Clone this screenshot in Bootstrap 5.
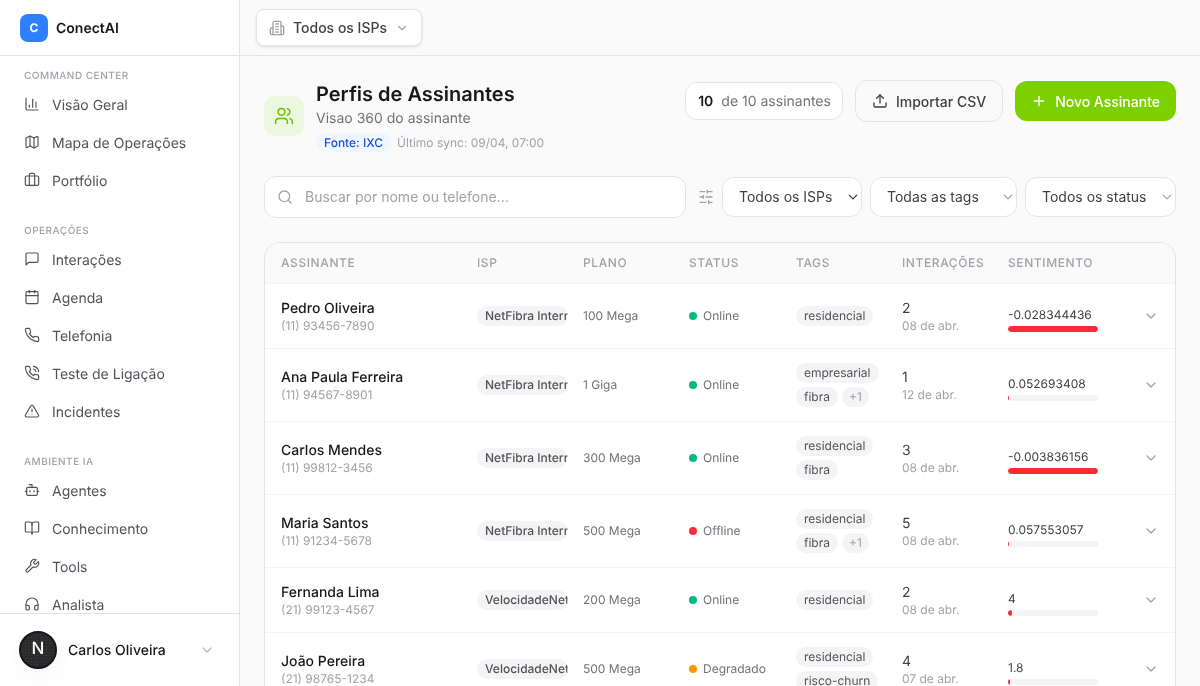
<!DOCTYPE html>
<html lang="pt-BR">
<head>
    <meta charset="UTF-8">
    <meta name="viewport" content="width=device-width, initial-scale=1.0">
    <title>Perfis de Assinantes</title>
    <link href="https://cdn.jsdelivr.net/npm/bootstrap@5.3.3/dist/css/bootstrap.min.css" rel="stylesheet">
    <script src="https://cdn.jsdelivr.net/npm/bootstrap@5.3.3/dist/js/bootstrap.bundle.min.js"></script>
    <style>
        html, body {
            height: 100%;
            overflow: hidden;
        }
        body {
            font-family: "Inter", "Liberation Sans", sans-serif;
            font-size: 14px;
            background-color: #fafafa;
            color: #18181b;
            text-rendering: geometricPrecision;
            -webkit-font-smoothing: antialiased;
        }
        .ico {
            width: 16px;
            height: 16px;
            fill: none;
            stroke: currentColor;
            stroke-width: 2;
            stroke-linecap: round;
            stroke-linejoin: round;
            flex-shrink: 0;
        }
        .app-shell {
            height: 686px;
            will-change: transform;
        }
        .side {
            width: 240px;
            flex-shrink: 0;
            background: #fff;
            border-right: 1px solid #e4e4e7;
        }
        .side-brand {
            height: 56px;
            flex-shrink: 0;
            padding-left: 20px;
            gap: 8px;
            border-bottom: 1px solid #e4e4e7;
            font-weight: 600;
        }
        .side-brand > span:last-child {
            padding-top: 2px;
        }
        .brand-mark {
            width: 28px;
            height: 28px;
            border-radius: 8px;
            background: #2f80ff;
            color: #fff;
            font-size: 12px;
            font-weight: 700;
        }
        .side-scroll {
            flex: 1;
            min-height: 0;
            overflow: hidden;
            padding-top: 11px;
        }
        .side-label {
            height: 16px;
            line-height: 16px;
            padding-top: 1px;
            padding-left: 24px;
            margin-bottom: 2px;
            font-size: 10px;
            font-weight: 500;
            letter-spacing: .05em;
            text-transform: uppercase;
            color: #a1a1aa;
        }
        .side-group {
            margin-bottom: 23px;
        }
        .side-link {
            height: 38px;
            padding: 0 0 0 24px;
            gap: 12px;
            color: #52525b;
            font-size: 14px;
        }
        .side-link .ico {
            stroke-width: 1.75;
        }
        .side-link span {
            padding-top: 2px;
        }
        .side-foot {
            height: 73px;
            flex-shrink: 0;
            padding: 0 24px 0 19px;
            border-top: 1px solid #e4e4e7;
            font-weight: 500;
        }
        .avatar-n {
            width: 38px;
            height: 38px;
            border-radius: 50%;
            background-color: #2a2a2c;
            background-image: radial-gradient(#3b3b3e 1px, transparent 1px);
            background-size: 3px 3px;
            border: 2px solid #18181b;
            box-shadow: 2px 8px 14px 6px rgba(0, 0, 0, .02);
            color: #fff;
            font-size: 17px;
            font-weight: 500;
            margin-right: 11px;
        }
        .top-strip {
            height: 56px;
            flex-shrink: 0;
            padding-left: 16px;
            border-bottom: 1px solid #e4e4e7;
        }
        .isp-switch {
            height: 37px;
            padding: 0 12px;
            gap: 8px;
            background: #fff;
            border: 1px solid #e4e4e7;
            border-radius: 8px;
            box-shadow: 0 1px 3px rgba(0, 0, 0, .12);
            color: #3f3f46;
            font-size: 14px;
            font-weight: 500;
        }
        .isp-switch > .ico:first-child {
            color: #a1a1aa;
        }
        .isp-switch > .ico:last-child {
            width: 14px;
            height: 14px;
            color: #a1a1aa;
        }
        .page-body {
            padding: 24px 24px 0;
            overflow: hidden;
        }
        .head-icon {
            width: 40px;
            height: 40px;
            border-radius: 10px;
            background: #ecf7df;
            color: #6cc000;
            margin-top: 16px;
            margin-right: 12px;
        }
        .head-icon .ico {
            width: 20px;
            height: 20px;
            stroke-width: 1.75;
        }
        .page-title {
            font-size: 20px;
            font-weight: 600;
            line-height: 28px;
            margin: 0;
        }
        .page-sub {
            color: #71717a;
            line-height: 20px;
            height: 20px;
            padding-top: 1px;
            margin: 0 0 5px;
        }
        .src-badge {
            background: #eff6ff;
            color: #1d4ed8;
            border-radius: 20px;
            padding: 0 8px;
            font-size: 12px;
            font-weight: 500;
            line-height: 19px;
        }
        .sync-note {
            color: #a1a1aa;
            font-size: 12px;
            margin-left: 6px;
        }
        .count-pill {
            height: 38px;
            padding: 0 11px 0 12px;
            background: #fff;
            border: 1px solid #e4e4e7;
            border-radius: 12px;
            color: #71717a;
            gap: 8px;
        }
        .count-pill b {
            color: #18181b;
            font-weight: 600;
        }
        .btn-import {
            height: 42px;
            padding: 0 16px;
            gap: 8px;
            background: #fafafa;
            border: 1px solid #e4e4e7;
            border-radius: 12px;
            color: #3f3f46;
            font-size: 14px;
            font-weight: 500;
        }
        .btn-new {
            height: 40px;
            padding: 0 16px;
            gap: 8px;
            background: #7dd000;
            border: 0;
            border-radius: 12px;
            color: #fff;
            font-size: 14px;
            font-weight: 500;
        }
        .filter-row {
            margin: 24px 0;
            gap: 8px;
        }
        .search-box {
            flex: 1;
            height: 42px;
            background: #fff;
            border: 1px solid #e4e4e7;
            border-radius: 12px;
            padding-left: 12px;
            gap: 12px;
            color: #a1a1aa;
        }
        .search-box input {
            border: 0;
            outline: 0;
            padding: 0 0 2px;
            flex: 1;
            font-size: 14px;
            background: transparent;
        }
        .search-box input::placeholder {
            color: #a1a1aa;
        }
        .slider-btn {
            color: #a1a1aa;
            margin: 0 0 0 4px;
        }
        .pick {
            height: 40px;
            padding: 0 16px 2px;
            border: 1px solid #e4e4e7;
            border-radius: 12px;
            background-color: #fff;
            background-position: right 2px center;
            background-size: 12px 10px;
            color: #3f3f46;
            font-size: 14px;
        }
        .pick-a { width: 140px; }
        .pick-b { width: 147px; }
        .pick-c { width: 151px; }
        .pick-b, .pick-c {
            background-image: url("data:image/svg+xml,%3csvg xmlns='http://www.w3.org/2000/svg' viewBox='0 0 16 16'%3e%3cpath fill='none' stroke='%23a1a1aa' stroke-linecap='round' stroke-linejoin='round' stroke-width='2' d='m2 5 6 6 6-6'/%3e%3c/svg%3e");
        }
        .table-wrap {
            background: #fff;
            border: 1px solid #e4e4e7;
            border-bottom: 0;
            border-radius: 16px 16px 0 0;
            overflow: hidden;
        }
        .subs-table {
            table-layout: fixed;
            width: 100%;
            margin: 0;
        }
        .subs-table th {
            height: 40px;
            padding: 0 0 0 16px;
            background: #fafafa;
            border-bottom: 1px solid #f4f4f5;
            color: #a1a1aa;
            font-size: 12px;
            font-weight: 500;
            letter-spacing: .05em;
            text-transform: uppercase;
            white-space: nowrap;
        }
        .subs-table td {
            padding: 14px 0 14px 16px;
            border-bottom: 1px solid #f4f4f5;
            vertical-align: middle;
            font-size: 12px;
            color: #71717a;
            background: #fff;
        }
        .line-main {
            font-size: 14px;
            line-height: 20px;
            height: 20px;
            padding-top: 1px;
            color: #18181b;
        }
        .sub-name {
            font-weight: 500;
        }
        .line-count {
            color: #3f3f46;
        }
        .line-sub {
            font-size: 12px;
            line-height: 16px;
            color: #a1a1aa;
        }
        .chip {
            display: inline-block;
            height: 20px;
            line-height: 20px;
            padding: 0 8px;
            border-radius: 10px;
            background: #f4f4f5;
            color: #52525b;
            font-size: 12px;
            white-space: nowrap;
        }
        .chip-isp {
            display: block;
            width: 91px;
            overflow: hidden;
            padding-right: 0;
            font-weight: 500;
        }
        .chip-more {
            color: #a1a1aa;
            padding: 0 7px;
        }
        .chip-wrap {
            gap: 4px;
        }
        .dot {
            width: 8px;
            height: 8px;
            border-radius: 50%;
            margin-right: 6px;
        }
        .dot-on { background: #00bc7d; }
        .dot-off { background: #fb2c36; }
        .dot-low { background: #fe9a00; }
        .senti {
            width: 90px;
            padding-top: 7px;
        }
        .senti-val {
            line-height: 16px;
            color: #3f3f46;
            white-space: nowrap;
        }
        .senti-bar {
            height: 6px;
            margin-top: 3px;
            background: #f4f4f5;
            border-radius: 3px;
            overflow: hidden;
        }
        .senti-fill {
            height: 100%;
            background: #fb2c36;
            border-radius: 3px;
        }
        .row-arrow {
            text-align: right;
            padding-right: 16px !important;
            color: #a1a1aa !important;
        }
    </style>
</head>
<body>

    <svg width="0" height="0" class="position-absolute">
        <symbol id="i-chart" viewBox="0 0 24 24"><path d="M3 3v16a2 2 0 0 0 2 2h16"/><path d="M18 17V9"/><path d="M13 17V5"/><path d="M8 17v-3"/></symbol>
        <symbol id="i-map" viewBox="0 0 24 24"><path d="M14.106 5.553a2 2 0 0 0 1.788 0l3.659-1.83A1 1 0 0 1 21 4.619v12.764a1 1 0 0 1-.553.894l-4.553 2.277a2 2 0 0 1-1.788 0l-4.212-2.106a2 2 0 0 0-1.788 0l-3.659 1.83A1 1 0 0 1 3 19.381V6.618a1 1 0 0 1 .553-.894l4.553-2.277a2 2 0 0 1 1.788 0z"/><path d="M15 5.764v15"/><path d="M9 3.236v15"/></symbol>
        <symbol id="i-case" viewBox="0 0 24 24"><path d="M16 20V4a2 2 0 0 0-2-2h-4a2 2 0 0 0-2 2v16"/><rect x="2" y="6" width="20" height="14" rx="2"/></symbol>
        <symbol id="i-msg" viewBox="0 0 24 24"><path d="M21 15a2 2 0 0 1-2 2H7l-4 4V5a2 2 0 0 1 2-2h14a2 2 0 0 1 2 2z"/></symbol>
        <symbol id="i-cal" viewBox="0 0 24 24"><path d="M8 2v4"/><path d="M16 2v4"/><rect x="3" y="4" width="18" height="18" rx="2"/><path d="M3 10h18"/></symbol>
        <symbol id="i-phone" viewBox="0 0 24 24"><path d="M22 16.92v3a2 2 0 0 1-2.18 2 19.79 19.79 0 0 1-8.63-3.07 19.5 19.5 0 0 1-6-6 19.79 19.79 0 0 1-3.07-8.67A2 2 0 0 1 4.11 2h3a2 2 0 0 1 2 1.72 12.84 12.84 0 0 0 .7 2.81 2 2 0 0 1-.45 2.11L8.09 9.91a16 16 0 0 0 6 6l1.27-1.27a2 2 0 0 1 2.11-.45 12.84 12.84 0 0 0 2.81.7A2 2 0 0 1 22 16.92z"/></symbol>
        <symbol id="i-call" viewBox="0 0 24 24"><path d="M22 16.92v3a2 2 0 0 1-2.18 2 19.79 19.79 0 0 1-8.63-3.07 19.5 19.5 0 0 1-6-6 19.79 19.79 0 0 1-3.07-8.67A2 2 0 0 1 4.11 2h3a2 2 0 0 1 2 1.72 12.84 12.84 0 0 0 .7 2.81 2 2 0 0 1-.45 2.11L8.09 9.91a16 16 0 0 0 6 6l1.27-1.27a2 2 0 0 1 2.11-.45 12.84 12.84 0 0 0 2.81.7A2 2 0 0 1 22 16.92z"/><path d="M14.05 2a9 9 0 0 1 8 7.94"/><path d="M14.05 6A5 5 0 0 1 18 10"/></symbol>
        <symbol id="i-alert" viewBox="0 0 24 24"><path d="m21.73 18-8-14a2 2 0 0 0-3.48 0l-8 14A2 2 0 0 0 4 21h16a2 2 0 0 0 1.73-3"/><path d="M12 9v4"/><path d="M12 17h.01"/></symbol>
        <symbol id="i-bot" viewBox="0 0 24 24"><path d="M12 8V4H8"/><rect x="4" y="8" width="16" height="12" rx="2"/><path d="M2 14h2"/><path d="M20 14h2"/><path d="M15 13v2"/><path d="M9 13v2"/></symbol>
        <symbol id="i-book" viewBox="0 0 24 24"><path d="M12 7v14"/><path d="M3 18a1 1 0 0 1-1-1V4a1 1 0 0 1 1-1h5a4 4 0 0 1 4 4 4 4 0 0 1 4-4h5a1 1 0 0 1 1 1v13a1 1 0 0 1-1 1h-6a3 3 0 0 0-3 3 3 3 0 0 0-3-3z"/></symbol>
        <symbol id="i-wrench" viewBox="0 0 24 24"><path d="M14.7 6.3a1 1 0 0 0 0 1.4l1.6 1.6a1 1 0 0 0 1.4 0l3.77-3.77a6 6 0 0 1-7.94 7.94l-6.91 6.91a2.12 2.12 0 0 1-3-3l6.91-6.91a6 6 0 0 1 7.94-7.94l-3.76 3.76z"/></symbol>
        <symbol id="i-head" viewBox="0 0 24 24"><path d="M3 14h3a2 2 0 0 1 2 2v3a2 2 0 0 1-2 2H5a2 2 0 0 1-2-2v-7a9 9 0 0 1 18 0v7a2 2 0 0 1-2 2h-1a2 2 0 0 1-2-2v-3a2 2 0 0 1 2-2h3"/></symbol>
        <symbol id="i-build" viewBox="0 0 24 24"><path d="M6 22V4a2 2 0 0 1 2-2h8a2 2 0 0 1 2 2v18Z"/><path d="M6 12H4a2 2 0 0 0-2 2v6a2 2 0 0 0 2 2h2"/><path d="M18 9h2a2 2 0 0 1 2 2v9a2 2 0 0 1-2 2h-2"/><path d="M10 6h4"/><path d="M10 10h4"/><path d="M10 14h4"/><path d="M10 18h4"/></symbol>
        <symbol id="i-users" viewBox="0 0 24 24"><path d="M16 21v-2a4 4 0 0 0-4-4H6a4 4 0 0 0-4 4v2"/><circle cx="9" cy="7" r="4"/><path d="M22 21v-2a4 4 0 0 0-3-3.87"/><path d="M16 3.13a4 4 0 0 1 0 7.75"/></symbol>
        <symbol id="i-upload" viewBox="0 0 24 24"><path d="M21 15v4a2 2 0 0 1-2 2H5a2 2 0 0 1-2-2v-4"/><path d="M17 8l-5-5-5 5"/><path d="M12 3v12"/></symbol>
        <symbol id="i-plus" viewBox="0 0 24 24"><path d="M5 12h14"/><path d="M12 5v14"/></symbol>
        <symbol id="i-search" viewBox="0 0 24 24"><circle cx="11" cy="11" r="8"/><path d="m21 21-4.3-4.3"/></symbol>
        <symbol id="i-sliders" viewBox="0 0 24 24"><path d="M21 4h-7"/><path d="M10 4H3"/><path d="M21 12h-9"/><path d="M8 12H3"/><path d="M21 20h-5"/><path d="M12 20H3"/><path d="M14 2v4"/><path d="M8 10v4"/><path d="M16 18v4"/></symbol>
        <symbol id="i-down" viewBox="0 0 24 24"><path d="m6 9 6 6 6-6"/></symbol>
    </svg>

    <div class="app-shell d-flex">
        <aside class="side d-flex flex-column">
            <div class="side-brand d-flex align-items-center">
                <span class="brand-mark d-flex align-items-center justify-content-center">C</span>
                <span>ConectAI</span>
            </div>
            <div class="side-scroll">
                <div class="side-group">
                    <div class="side-label">Command Center</div>
                    <nav class="nav flex-column">
                        <a class="nav-link side-link d-flex align-items-center" href="#"><svg class="ico"><use href="#i-chart"/></svg><span>Visão Geral</span></a>
                        <a class="nav-link side-link d-flex align-items-center" href="#"><svg class="ico"><use href="#i-map"/></svg><span>Mapa de Operações</span></a>
                        <a class="nav-link side-link d-flex align-items-center" href="#"><svg class="ico"><use href="#i-case"/></svg><span>Portfólio</span></a>
                    </nav>
                </div>
                <div class="side-group">
                    <div class="side-label">Operações</div>
                    <nav class="nav flex-column">
                        <a class="nav-link side-link d-flex align-items-center" href="#"><svg class="ico"><use href="#i-msg"/></svg><span>Interações</span></a>
                        <a class="nav-link side-link d-flex align-items-center" href="#"><svg class="ico"><use href="#i-cal"/></svg><span>Agenda</span></a>
                        <a class="nav-link side-link d-flex align-items-center" href="#"><svg class="ico"><use href="#i-phone"/></svg><span>Telefonia</span></a>
                        <a class="nav-link side-link d-flex align-items-center" href="#"><svg class="ico"><use href="#i-call"/></svg><span>Teste de Ligação</span></a>
                        <a class="nav-link side-link d-flex align-items-center" href="#"><svg class="ico"><use href="#i-alert"/></svg><span>Incidentes</span></a>
                    </nav>
                </div>
                <div class="side-group">
                    <div class="side-label">Ambiente IA</div>
                    <nav class="nav flex-column">
                        <a class="nav-link side-link d-flex align-items-center" href="#"><svg class="ico"><use href="#i-bot"/></svg><span>Agentes</span></a>
                        <a class="nav-link side-link d-flex align-items-center" href="#"><svg class="ico"><use href="#i-book"/></svg><span>Conhecimento</span></a>
                        <a class="nav-link side-link d-flex align-items-center" href="#"><svg class="ico"><use href="#i-wrench"/></svg><span>Tools</span></a>
                        <a class="nav-link side-link d-flex align-items-center" href="#"><svg class="ico"><use href="#i-head"/></svg><span>Analista</span></a>
                    </nav>
                </div>
            </div>
            <div class="side-foot d-flex align-items-center">
                <span class="avatar-n d-flex align-items-center justify-content-center">N</span>
                <span class="flex-grow-1">Carlos Oliveira</span>
                <svg class="ico text-secondary opacity-50"><use href="#i-down"/></svg>
            </div>
        </aside>

        <main class="flex-grow-1 d-flex flex-column overflow-hidden">
            <div class="top-strip d-flex align-items-center">
                <button class="isp-switch d-flex align-items-center" type="button">
                    <svg class="ico"><use href="#i-build"/></svg>
                    <span>Todos os ISPs</span>
                    <svg class="ico"><use href="#i-down"/></svg>
                </button>
            </div>

            <div class="page-body flex-grow-1">
                <div class="d-flex justify-content-between align-items-start">
                    <div class="d-flex align-items-start">
                        <span class="head-icon d-flex align-items-center justify-content-center"><svg class="ico"><use href="#i-users"/></svg></span>
                        <div>
                            <h1 class="page-title">Perfis de Assinantes</h1>
                            <p class="page-sub">Visao 360 do assinante</p>
                            <div class="d-flex align-items-center">
                                <span class="src-badge">Fonte: IXC</span>
                                <span class="sync-note">Último sync: 09/04, 07:00</span>
                            </div>
                        </div>
                    </div>
                    <div class="d-flex align-items-center gap-2">
                        <span class="count-pill d-flex align-items-center"><b>10</b> de 10 assinantes</span>
                        <button class="btn btn-import d-flex align-items-center ms-1" type="button"><svg class="ico"><use href="#i-upload"/></svg>Importar CSV</button>
                        <button class="btn btn-new d-flex align-items-center ms-1" type="button"><svg class="ico"><use href="#i-plus"/></svg>Novo Assinante</button>
                    </div>
                </div>

                <div class="filter-row d-flex align-items-center">
                    <label class="search-box d-flex align-items-center mb-0">
                        <svg class="ico"><use href="#i-search"/></svg>
                        <input type="text" placeholder="Buscar por nome ou telefone...">
                    </label>
                    <svg class="ico slider-btn"><use href="#i-sliders"/></svg>
                    <select class="form-select pick pick-a"><option>Todos os ISPs</option></select>
                    <select class="form-select pick pick-b"><option>Todas as tags</option></select>
                    <select class="form-select pick pick-c"><option>Todos os status</option></select>
                </div>

                <div class="table-wrap">
                    <table class="subs-table">
                        <colgroup>
                            <col style="width: 196px"><col style="width: 106px"><col style="width: 106px"><col style="width: 107px"><col style="width: 106px"><col style="width: 106px"><col style="width: 122px"><col>
                        </colgroup>
                        <thead>
                            <tr><th>Assinante</th><th>ISP</th><th>Plano</th><th>Status</th><th>Tags</th><th>Interações</th><th>Sentimento</th><th></th></tr>
                        </thead>
                        <tbody id="subs-rows"></tbody>
                    </table>
                </div>
            </div>
        </main>
    </div>

    <script>
        const subscribers = [
            { name: 'Pedro Oliveira', phone: '(11) 93456-7890', isp: 'NetFibra Internet', plan: '100 Mega', status: 'Online', tags: ['residencial'], count: 2, date: '08 de abr.', score: '-0.028344436', bar: 100 },
            { name: 'Ana Paula Ferreira', phone: '(11) 94567-8901', isp: 'NetFibra Internet', plan: '1 Giga', status: 'Online', tags: ['empresarial', 'fibra'], more: 1, count: 1, date: '12 de abr.', score: '0.052693408', bar: 1 },
            { name: 'Carlos Mendes', phone: '(11) 99812-3456', isp: 'NetFibra Internet', plan: '300 Mega', status: 'Online', tags: ['residencial', 'fibra'], count: 3, date: '08 de abr.', score: '-0.003836156', bar: 100 },
            { name: 'Maria Santos', phone: '(11) 91234-5678', isp: 'NetFibra Internet', plan: '500 Mega', status: 'Offline', tags: ['residencial', 'fibra'], more: 1, count: 5, date: '08 de abr.', score: '0.057553057', bar: 1 },
            { name: 'Fernanda Lima', phone: '(21) 99123-4567', isp: 'VelocidadeNet', plan: '200 Mega', status: 'Online', tags: ['residencial'], count: 2, date: '08 de abr.', score: '4', bar: 4 },
            { name: 'João Pereira', phone: '(21) 98765-1234', isp: 'VelocidadeNet', plan: '500 Mega', status: 'Degradado', tags: ['residencial', 'risco-churn'], count: 4, date: '07 de abr.', score: '1.8', bar: 2 }
        ];
        const dotClass = { Online: 'dot-on', Offline: 'dot-off', Degradado: 'dot-low' };

        document.getElementById('subs-rows').innerHTML = subscribers.map(s => `
            <tr>
                <td><div class="line-main sub-name">${s.name}</div><div class="line-sub">${s.phone}</div></td>
                <td><span class="chip chip-isp">${s.isp}</span></td>
                <td>${s.plan}</td>
                <td><div class="d-flex align-items-center"><span class="dot ${dotClass[s.status]}"></span>${s.status}</div></td>
                <td><div class="d-flex flex-wrap chip-wrap">${s.tags.map(t => `<span class="chip">${t}</span>`).join('')}${s.more ? `<span class="chip chip-more">+${s.more}</span>` : ''}</div></td>
                <td><div class="line-main line-count">${s.count}</div><div class="line-sub">${s.date}</div></td>
                <td><div class="senti"><div class="senti-val">${s.score}</div><div class="senti-bar"><div class="senti-fill" style="width: ${s.bar}%"></div></div></div></td>
                <td class="row-arrow"><svg class="ico"><use href="#i-down"/></svg></td>
            </tr>`).join('');
    </script>

</body>
</html>
